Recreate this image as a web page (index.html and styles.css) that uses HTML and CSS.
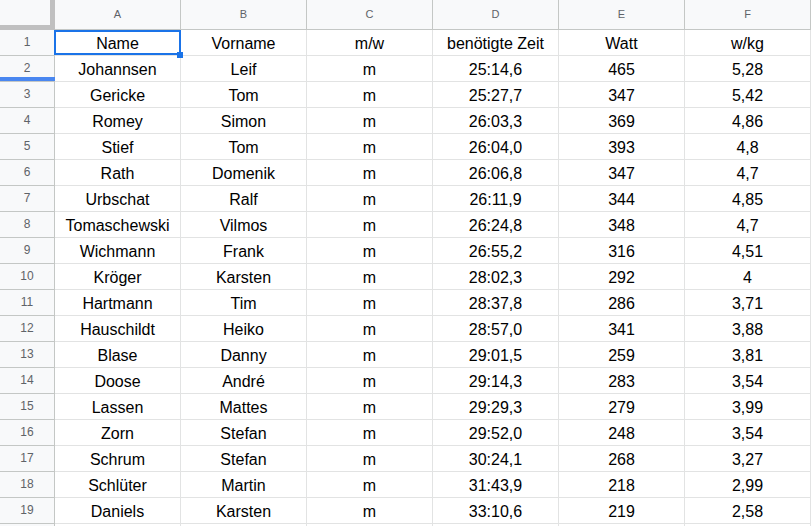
FILE: index.html
```html
<!DOCTYPE html>
<html lang="de">
<head>
<meta charset="utf-8">
<title>Tabelle</title>
<link rel="stylesheet" href="styles.css">
</head>
<body>
<div class="sheet">
  <div class="corner"></div>
  <div class="ch">A</div><div class="ch">B</div><div class="ch">C</div><div class="ch">D</div><div class="ch">E</div><div class="ch">F</div>

  <div class="rh">1</div><div class="c sel">Name<span class="selbox"></span><span class="handle"></span></div><div class="c">Vorname</div><div class="c">m/w</div><div class="c">benötigte Zeit</div><div class="c">Watt</div><div class="c">w/kg</div>
  <div class="rh hover">2<span class="resize"></span></div><div class="c">Johannsen</div><div class="c">Leif</div><div class="c">m</div><div class="c">25:14,6</div><div class="c">465</div><div class="c">5,28</div>
  <div class="rh">3</div><div class="c">Gericke</div><div class="c">Tom</div><div class="c">m</div><div class="c">25:27,7</div><div class="c">347</div><div class="c">5,42</div>
  <div class="rh">4</div><div class="c">Romey</div><div class="c">Simon</div><div class="c">m</div><div class="c">26:03,3</div><div class="c">369</div><div class="c">4,86</div>
  <div class="rh">5</div><div class="c">Stief</div><div class="c">Tom</div><div class="c">m</div><div class="c">26:04,0</div><div class="c">393</div><div class="c">4,8</div>
  <div class="rh">6</div><div class="c">Rath</div><div class="c">Domenik</div><div class="c">m</div><div class="c">26:06,8</div><div class="c">347</div><div class="c">4,7</div>
  <div class="rh">7</div><div class="c">Urbschat</div><div class="c">Ralf</div><div class="c">m</div><div class="c">26:11,9</div><div class="c">344</div><div class="c">4,85</div>
  <div class="rh">8</div><div class="c">Tomaschewski</div><div class="c">Vilmos</div><div class="c">m</div><div class="c">26:24,8</div><div class="c">348</div><div class="c">4,7</div>
  <div class="rh">9</div><div class="c">Wichmann</div><div class="c">Frank</div><div class="c">m</div><div class="c">26:55,2</div><div class="c">316</div><div class="c">4,51</div>
  <div class="rh">10</div><div class="c">Kröger</div><div class="c">Karsten</div><div class="c">m</div><div class="c">28:02,3</div><div class="c">292</div><div class="c">4</div>
  <div class="rh">11</div><div class="c">Hartmann</div><div class="c">Tim</div><div class="c">m</div><div class="c">28:37,8</div><div class="c">286</div><div class="c">3,71</div>
  <div class="rh">12</div><div class="c">Hauschildt</div><div class="c">Heiko</div><div class="c">m</div><div class="c">28:57,0</div><div class="c">341</div><div class="c">3,88</div>
  <div class="rh">13</div><div class="c">Blase</div><div class="c">Danny</div><div class="c">m</div><div class="c">29:01,5</div><div class="c">259</div><div class="c">3,81</div>
  <div class="rh">14</div><div class="c">Doose</div><div class="c">André</div><div class="c">m</div><div class="c">29:14,3</div><div class="c">283</div><div class="c">3,54</div>
  <div class="rh">15</div><div class="c">Lassen</div><div class="c">Mattes</div><div class="c">m</div><div class="c">29:29,3</div><div class="c">279</div><div class="c">3,99</div>
  <div class="rh">16</div><div class="c">Zorn</div><div class="c">Stefan</div><div class="c">m</div><div class="c">29:52,0</div><div class="c">248</div><div class="c">3,54</div>
  <div class="rh">17</div><div class="c">Schrum</div><div class="c">Stefan</div><div class="c">m</div><div class="c">30:24,1</div><div class="c">268</div><div class="c">3,27</div>
  <div class="rh">18</div><div class="c">Schlüter</div><div class="c">Martin</div><div class="c">m</div><div class="c">31:43,9</div><div class="c">218</div><div class="c">2,99</div>
  <div class="rh">19</div><div class="c">Daniels</div><div class="c">Karsten</div><div class="c">m</div><div class="c">33:10,6</div><div class="c">219</div><div class="c">2,58</div>
  <div class="rh"></div><div class="c"></div><div class="c"></div><div class="c"></div><div class="c"></div><div class="c"></div><div class="c"></div>
</div>
</body>
</html>
```
FILE: styles.css
```css
html, body {
  margin: 0;
  padding: 0;
  background: #ffffff;
  overflow: hidden;
}

.sheet {
  display: grid;
  grid-template-columns: 55px repeat(6, 126px);
  grid-template-rows: 30px repeat(20, 26px);
  font-family: "Liberation Sans", Arial, sans-serif;
}

.corner {
  box-sizing: border-box;
  background: #f8f9fa;
  border-right: 5px solid #c0c0c0;
  border-bottom: 5px solid #c0c0c0;
}

.ch {
  box-sizing: border-box;
  background: #f8f9fa;
  border-right: 1px solid #c4c7c5;
  border-bottom: 1px solid #c4c7c5;
  color: #5f6368;
  font-size: 11px;
  line-height: 29px;
  text-align: center;
}

.rh {
  position: relative;
  box-sizing: border-box;
  background: #f8f9fa;
  border-right: 1px solid #c4c7c5;
  border-bottom: 1px solid #c4c7c5;
  color: #5f6368;
  font-size: 12px;
  line-height: 25px;
  text-align: center;
}

.resize {
  position: absolute;
  left: 0;
  right: -1px;
  bottom: 0;
  height: 4px;
  background: #4a87f0;
}

.c {
  position: relative;
  box-sizing: border-box;
  border-right: 1px solid #e2e3e3;
  border-bottom: 1px solid #e2e3e3;
  color: #000000;
  font-size: 16px;
  padding-top: 1px;
  line-height: 25px;
  height: 26px;
  text-align: center;
  white-space: nowrap;
  overflow: visible;
}

.selbox {
  position: absolute;
  left: -1px;
  top: 0;
  width: 127px;
  height: 25px;
  box-sizing: border-box;
  border: 2px solid #1a73e8;
  pointer-events: none;
}

.handle {
  position: absolute;
  left: 122px;
  top: 22px;
  width: 6px;
  height: 6px;
  background: #1a73e8;
  z-index: 2;
}
```
